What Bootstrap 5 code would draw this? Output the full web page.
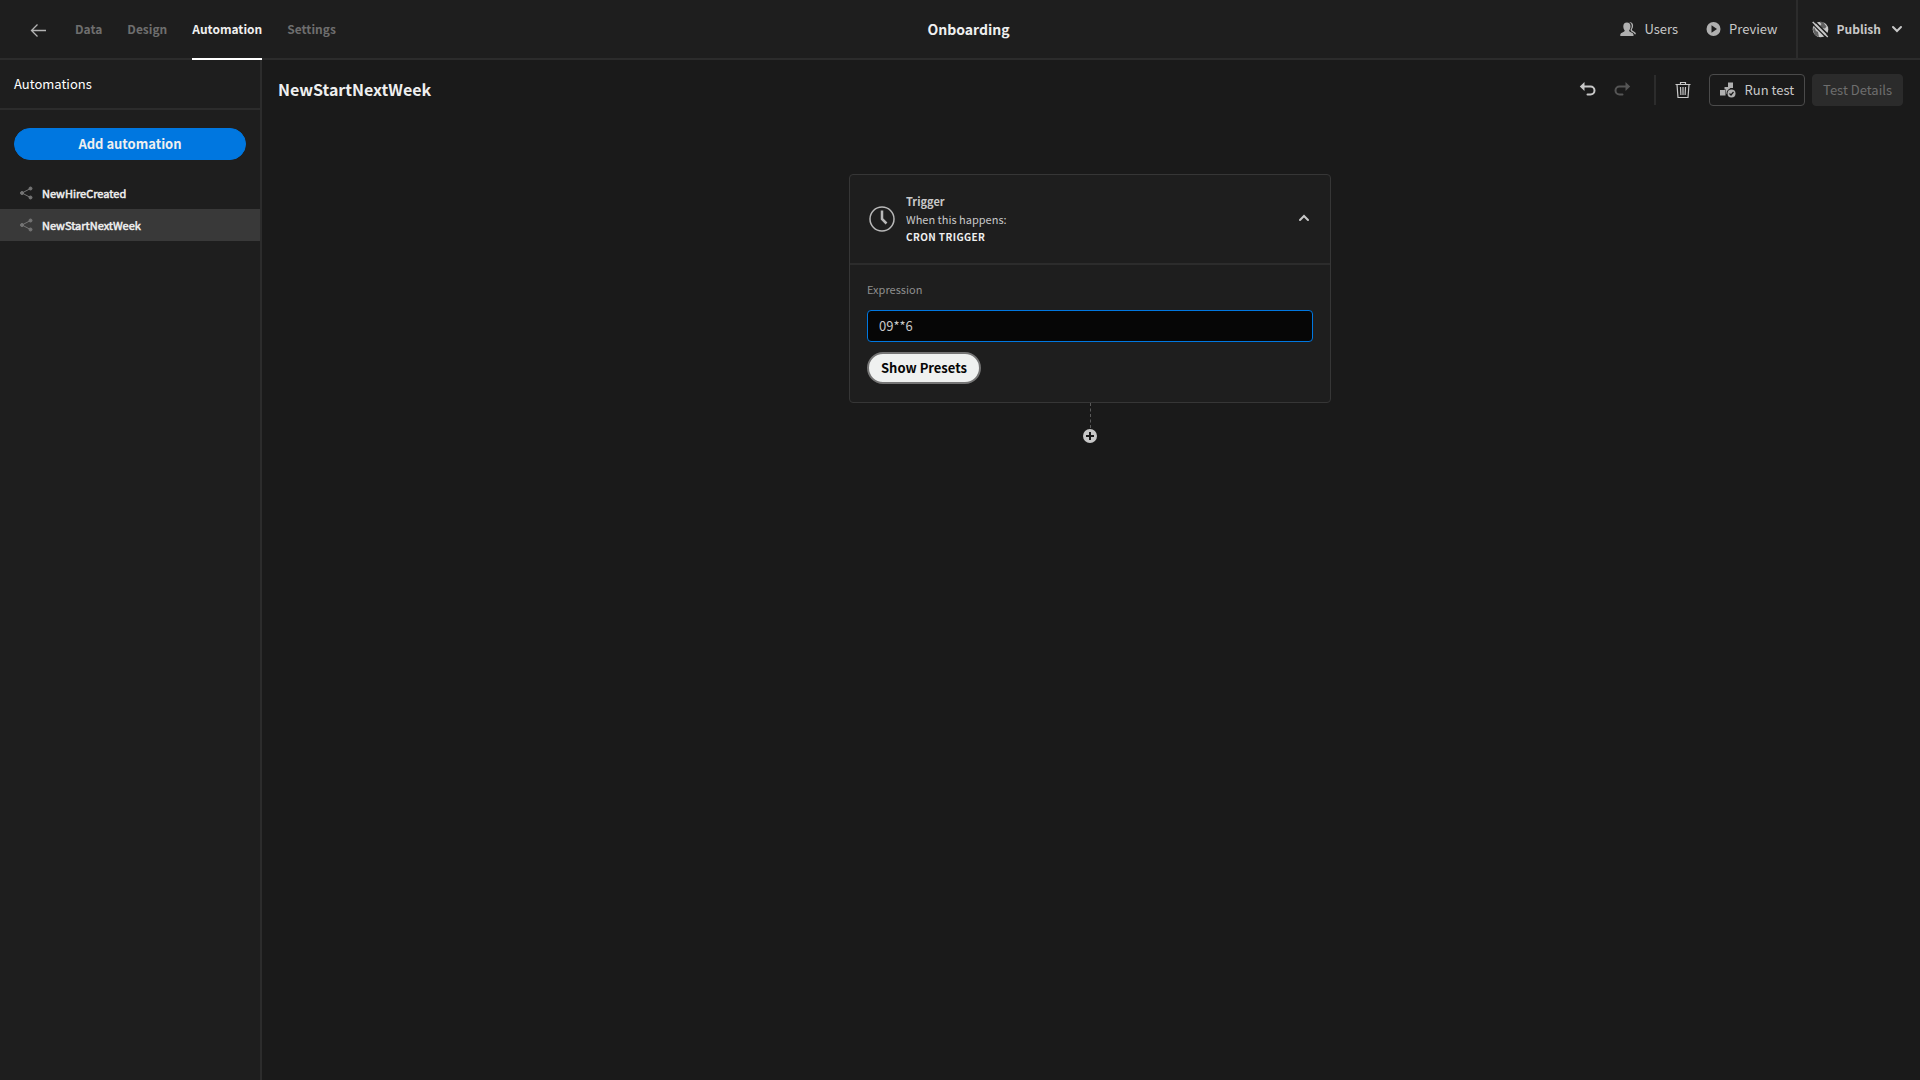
<!DOCTYPE html>
<html lang="en" data-bs-theme="dark">
<head>
<meta charset="utf-8">
<meta name="viewport" content="width=device-width, initial-scale=1">
<title>Onboarding</title>
<link rel="stylesheet" href="https://cdn.jsdelivr.net/npm/bootstrap@5.3.0/dist/css/bootstrap.min.css">
<style>
:root{--bg:#1a1a1a;--panel:#1e1e1e;--line:#2c2c2c;--txt:#c8c8c8;--strong:#efefef;--muted:#6e6e6e}
body{font-family:"Noto Sans CJK JP","Noto Sans CJK SC",sans-serif;font-size:13px;line-height:20px;color:var(--txt);background:var(--bg)}
svg{display:block;flex:none}
.topbar{height:60px;background:var(--panel);border-bottom:2px solid var(--line)}
.topbar-side{flex:1 1 0}
.back{padding-left:30px;margin-right:28px;color:#b4b4b4}
.tabs{gap:25px}
.tabs a{font-size:12px;color:var(--muted);font-weight:700;text-decoration:none;height:60px;line-height:58px;border-bottom:2px solid transparent}
.tabs a.active{color:var(--strong);border-color:#fff}
.title-slot{height:58px;padding-left:17px}
.app-title{font-size:14px;font-weight:700;color:var(--strong);margin:0}
.plain{background:none;border:0;padding:0;color:inherit;display:flex;align-items:center;gap:8px}
.plain.faded{color:#555}
.top-action{margin-right:28px}
.top-action + .publish{margin-left:-10px}
.publish{height:58px;border-left:2px solid var(--line);padding:0 17px 0 14px;font-size:12px;font-weight:700}
.sidebar{width:262px;background:var(--panel);border-right:2px solid var(--line);flex:none}
.side-head{height:50px;border-bottom:2px solid var(--line);padding:0 14px;font-size:13px;font-weight:400;line-height:20px;margin:0}
.side-action{padding:18px 14px 17px}
.btn{font-family:inherit;font-size:13px;line-height:20px}
.btn-add{height:32px;--bs-btn-bg:#0077e0;--bs-btn-border-color:#0077e0;--bs-btn-color:#efefef;font-weight:700;padding:4px}
.flow-link{height:32px;padding:0 20px;gap:9px;font-size:11px;-webkit-text-stroke:.5px currentColor;color:var(--strong);text-decoration:none}
.flow-link.active{background:#393939}
.flow-link svg{color:#757575}
.toolbar{height:60px;padding:0 17px 0 16px}
.flow-title{font-size:16px;font-weight:700;color:var(--strong);margin:0}
.rule{width:2px;height:30px;background:var(--line);margin:0 19px 0 23px}
.trash{margin-right:18px}
.btn-tool{height:32px;border-radius:4px;padding:0 10px;display:flex;align-items:center;gap:8px;border:1px solid #4b4b4b;color:var(--txt)}
.btn-tool + .btn-tool{margin-left:7px}
.btn-tool:disabled{background:#2b2b2b;border-color:#2b2b2b;color:var(--muted);opacity:1}
.canvas{padding:54px 2px 0 0}
.block{width:482px;background:var(--panel);border:1px solid #363636;border-radius:4px}
.block-head{height:90px;border-bottom:2px solid var(--line);padding:0 20px 0 19px;gap:11px;font-size:11px;line-height:18px}
.tracked{font-size:10px;letter-spacing:.04em;color:var(--strong);font-weight:700}
.block-body{padding:15px 17px 18px}
.block-body label{font-size:11px;line-height:18px;color:#8e8e8e;margin-bottom:12px;display:block}
.expr{height:32px;border:1px solid #0077e0;border-radius:4px;background:#060606;color:var(--txt);font-size:13px;line-height:20px;padding:4px 11px 6px;margin-bottom:10px}
.expr:focus{background:#060606}
.btn-preset{height:32px;border:2px solid #757575;background:#eff1f0;color:#060606;font-weight:700;padding:3px 12px}
.connector{height:25px;border-left:1px dashed #5a5a5a}
</style>
<script src="https://cdn.jsdelivr.net/npm/bootstrap@5.3.0/dist/js/bootstrap.bundle.min.js"></script>
</head>
<body>
<div class="d-flex flex-column min-vh-100">
<header class="topbar d-flex align-items-start">
  <nav class="topbar-side d-flex">
    <a href="#" class="back d-flex align-items-center" aria-label="Back"><svg width="17" height="58" viewBox="0 0 17 58" fill="none" stroke="currentColor" stroke-width="1.3"><path d="M7.500 23.500L1.500 29.500L7.500 35.500M1.500 29.500H16"/></svg></a>
    <div class="tabs d-flex">
      <a href="#">Data</a><a href="#">Design</a><a href="#" class="active" aria-current="page">Automation</a><a href="#">Settings</a>
    </div>
  </nav>
  <div class="title-slot d-flex align-items-center"><h1 class="app-title">Onboarding</h1></div>
  <div class="topbar-side d-flex justify-content-end">
    <button class="plain top-action"><svg width="16" height="58" viewBox="0 0 16 58" fill="#b0b0b0"><path d="M.3 36v-1.600q0-1.200 2.600-2.200 1.800-.600 1.800-1.400 0-.5-.5-1.100-.9-1.300-.9-3.300 0-4 3.600-4t3.600 4q0 2-.9 3.300-.5.600-.5 1.100 0 .8 1.800 1.400 2.600 1 2.600 2.200V36z"/><path d="M9.200 22.200q3.800-.6 3.900 3.600 0 2-1 3.300-.5.700.2 1.300l2.700 1.800q.9.600.9 2.100h-1.300q-.4-1.400-2.100-2.100-2-.8-2-2.100 0-.8.600-1.500.6-1.100.6-3.100 0-2.200-2.500-3.300z"/></svg>Users</button>
    <button class="plain top-action"><svg width="15" height="58" viewBox="0 0 15 58"><circle cx="7.500" cy="29" r="7" fill="#b0b0b0"/><path d="M5.500 25.200v7.600L11 29z" fill="#1e1e1e"/></svg>Preview</button>
    <button class="plain publish"><svg width="17" height="17" viewBox="0 0 17 17"><circle cx="8.500" cy="8.500" r="7.800" fill="#c8c8c8"/><path d="M7 .5L9.500 3 8 5l2 2 3 .5 1.500-2L12.500 3 11.500 1zM2 6l2 4 2 1 1 5-4-2-2-5z" fill="#1e1e1e" opacity=".6"/><path d="M2.400 0L17 14.600" stroke="#1e1e1e" stroke-width="1.600"/><path d="M.7 1L15.700 16" stroke="#c8c8c8" stroke-width="1.500"/><path d="M0 2.500L14.500 17" stroke="#1e1e1e" stroke-width="1.200"/></svg>Publish<svg width="14" height="10" viewBox="0 0 14 10" fill="none" stroke="currentColor" stroke-width="2" stroke-linecap="round"><path d="M4 3l4 4 4-4"/></svg></button>
  </div>
</header>
<div class="d-flex flex-grow-1">
  <aside class="sidebar">
    <h2 class="side-head d-flex align-items-center">Automations</h2>
    <div class="side-action"><button class="btn btn-add rounded-pill w-100">Add automation</button></div>
    <nav>
      <a href="#" class="flow-link d-flex align-items-center"><svg width="13" height="14" viewBox="0 0 13 14" fill="currentColor" stroke="currentColor"><path d="M2 7l8.500-4.500M2 7l8.500 4.500" fill="none"/><circle cx="2" cy="7" r="1.500"/><circle cx="10.500" cy="2.500" r="1.500"/><circle cx="10.500" cy="11.500" r="1.500"/></svg>NewHireCreated</a>
      <a href="#" class="flow-link active d-flex align-items-center"><svg width="13" height="14" viewBox="0 0 13 14" fill="currentColor" stroke="currentColor"><path d="M2 7l8.500-4.500M2 7l8.500 4.500" fill="none"/><circle cx="2" cy="7" r="1.500"/><circle cx="10.500" cy="2.500" r="1.500"/><circle cx="10.500" cy="11.500" r="1.500"/></svg>NewStartNextWeek</a>
    </nav>
  </aside>
  <main class="flex-grow-1">
    <div class="toolbar d-flex align-items-center">
      <h2 class="flow-title me-auto">NewStartNextWeek</h2>
      <button class="plain" aria-label="Undo"><svg width="18" height="18" viewBox="0 0 18 18"><path d="M4 5.500h7.500a3.700 3.700 0 0 1 0 8H8.500" fill="none" stroke="currentColor" stroke-width="2" stroke-linecap="round"/><path d="M5.500 1v9L.8 5.500z" fill="currentColor"/></svg></button>
      <button class="plain faded ms-3" aria-label="Redo"><svg width="18" height="18" viewBox="0 0 18 18"><path d="M14 5.500H6.500a3.700 3.700 0 0 0 0 8H9.500" fill="none" stroke="currentColor" stroke-width="2" stroke-linecap="round"/><path d="M12.500 1v9l4.700-4.500z" fill="currentColor"/></svg></button>
      <span class="rule"></span>
      <button class="plain trash" aria-label="Delete"><svg width="16" height="18" viewBox="0 0 16 18" fill="none" stroke="currentColor"><path d="M.5 3.500h15M5.500 3V1.500h5V3M2 3.500l1 13h10l1-13" stroke-width="1.200"/><path d="M5.500 6l.4 8M8 6v8M10.500 6l-.4 8" stroke-width="1.200"/></svg></button>
      <button class="btn btn-tool"><svg width="16" height="16" viewBox="0 0 16 16" fill="#b0b0b0"><path d="M0 8h5.500v5.500H0z"/><path d="M8 .5h5V6h-2.500L7.500 9v3H6V7.500H4.500V5H8z"/><circle cx="11.500" cy="11.500" r="5" fill="#1a1a1a"/><circle cx="11.500" cy="11.500" r="4"/><path d="M9.500 11.500l1.500 1.500 2.500-3" fill="none" stroke="#1a1a1a" stroke-width="1.200"/></svg>Run test</button>
      <button class="btn btn-tool" disabled>Test Details</button>
    </div>
    <div class="canvas d-flex flex-column align-items-center">
      <section class="block">
        <div class="block-head d-flex align-items-center">
          <svg width="26" height="26" viewBox="0 0 26 26" fill="none" stroke="#b8b8b8"><circle cx="13" cy="13" r="12" stroke-width="1.500"/><path d="M13 4.500v8.500l4.500 4.500" stroke-width="2.500"/></svg>
          <div class="me-auto"><div class="fw-bold">Trigger</div><div>When this happens:</div><div class="tracked">CRON TRIGGER</div></div>
          <button class="plain" aria-label="Collapse"><svg width="12" height="12" viewBox="0 0 12 12" fill="none" stroke="currentColor" stroke-width="2" stroke-linecap="round"><path d="M2 7l4-4 4 4"/></svg></button>
        </div>
        <div class="block-body">
          <label for="expr">Expression</label>
          <input id="expr" class="form-control expr shadow-none" type="text" value="09**6">
          <button class="btn btn-preset rounded-pill">Show Presets</button>
        </div>
      </section>
      <div class="connector"></div>
      <button class="plain" aria-label="Add step"><svg width="16" height="16" viewBox="0 0 16 16"><circle cx="8" cy="8" r="7" fill="#c8c8c8"/><path d="M8 4v8M4 8h8" stroke="#1a1a1a" stroke-width="2"/></svg></button>
    </div>
  </main>
</div>
</div>
</body>
</html>
